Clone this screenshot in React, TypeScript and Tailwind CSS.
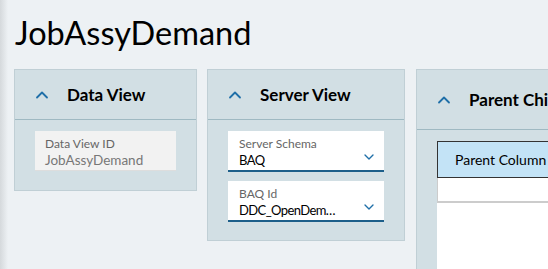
import React from 'react';
import { ChevronUp, ChevronDown } from 'lucide-react';

const font = { fontFamily: 'Lato, "Noto Sans", sans-serif' };

function PanelHeader({ title, tall }: { title: string; tall?: boolean }) {
  return (
    <div
      className={`flex items-center border-b border-[#9fb9c2] pl-[17px] ${tall ? 'h-[60px]' : 'h-[50px]'}`}
    >
      <ChevronUp size={20} strokeWidth={2.2} className="shrink-0 text-[#1f6fa8]" />
      <span className="ml-[15px] text-[17px] font-bold text-black whitespace-nowrap">{title}</span>
    </div>
  );
}

function SelectField({ label, value }: { label: string; value: string }) {
  return (
    <div className="relative h-[41px] bg-white border-b-2 border-[#1d5f8a] px-[11px] pt-[5px]">
      <div className="text-[12px] leading-[15px] text-[#666]">{label}</div>
      <div className="text-[13px] leading-[18px] tracking-[-0.6px] text-black whitespace-nowrap">{value}</div>
      <ChevronDown size={16} strokeWidth={2} className="absolute right-[7px] top-[18px] text-[#1f6fa8]" />
    </div>
  );
}

export default function App() {
  return (
    <div className="flex w-[548px] h-[269px] overflow-hidden bg-[#edf1f4]" style={font}>
      <div className="w-[8px] shrink-0 bg-gradient-to-r from-[#d5d9dc] to-[#edf1f4]" />
      <div className="flex-1 pl-[6px] min-w-0">
        <h1 className="pt-[14px] h-[69px] text-[32.5px] leading-[38px] text-black pl-[1px]">JobAssyDemand</h1>
        <div className="flex items-start gap-[10px]">
          <div className="w-[183px] h-[122px] shrink-0 bg-[#d2dfe4] border border-[#c0cfd5]">
            <PanelHeader title="Data View" />
            <div className="px-[20px] pt-[11px]">
              <div className="h-[40px] bg-[#f2f2f2] border-b border-[#ddd] px-[10px] pt-[5px]">
                <div className="text-[12px] leading-[15px] text-[#666]">Data View ID</div>
                <div className="text-[13.5px] leading-[18px] text-[#777]">JobAssyDemand</div>
              </div>
            </div>
          </div>
          <div className="w-[198px] h-[172px] shrink-0 bg-[#d2dfe4] border border-[#c0cfd5]">
            <PanelHeader title="Server View" />
            <div className="flex flex-col gap-[9px] px-[20px] pt-[11px]">
              <SelectField label="Server Schema" value="BAQ" />
              <SelectField label="BAQ Id" value="DDC_OpenDem…" />
            </div>
          </div>
          <div className="w-[240px] h-[220px] shrink-0 bg-[#d2dfe4] border border-[#c0cfd5] ml-[1px]">
            <PanelHeader title="Parent Child Relation" tall />
            <div className="pl-[20px] pt-[11px]">
              <div className="bg-white h-[200px]">
                <div className="h-[37px] bg-[#c3e3f6] border border-[#333] flex items-center pl-[17px] text-[14px] text-black whitespace-nowrap">
                  Parent Column
                </div>
                <div className="h-[25px] border-b-2 border-[#ccc] border-l border-l-[#ccc]" />
              </div>
            </div>
          </div>
        </div>
      </div>
    </div>
  );
}
